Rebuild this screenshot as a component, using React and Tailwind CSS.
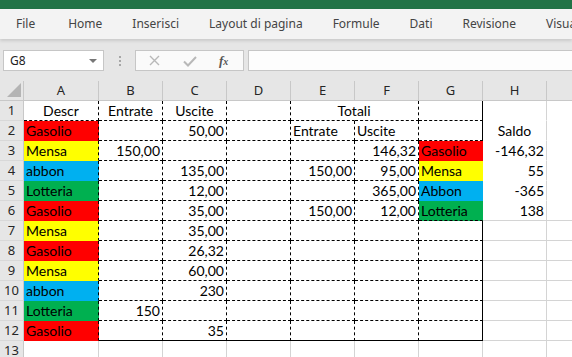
import React from 'react';

const COLS = ['A', 'B', 'C', 'D', 'E', 'F', 'G', 'H', 'I'];

const FILL = {
  red: 'bg-[#ff0000]',
  yel: 'bg-[#ffff00]',
  blu: 'bg-[#00b0f0]',
  grn: 'bg-[#00b050]',
};

const RIGHT = {
  g: 'border-r-[#d4d4d4]',
  d: 'border-r-black [border-right-style:dashed]',
  s: 'border-r-black',
  n: 'border-r-transparent',
  w: 'border-r-white',
};

const BOTTOM = {
  g: 'border-b-[#d4d4d4]',
  d: 'border-b-black [border-bottom-style:dashed]',
  s: 'border-b-black',
  n: 'border-b-transparent',
  w: 'border-b-white',
};

// one entry per cell: [text, align, fill, right, bottom]
const c = (t = '', a = 'l', f = '', r = 'd', b = 'd') => ({ t, a, f, r, b });

const rowA = (t, f, b = 'n') => c(t, 'l', f, 'd', b);
const hCell = (t = '', b = 'w') => c(t, 'r', '', 'g', b);

const rows = [
  [c('Descr', 'c'), c('Entrate', 'c'), c('Uscite', 'c'), c(), c('Totali', 'm', '', 'n'), c(), c('', 'l', '', 's'), hCell('', 'w'), hCell('', 'w')],
  [rowA('Gasolio', 'red'), c(), c('50,00', 'r'), c(), c('Entrate'), c('Uscite'), c('', 'l', '', 's'), c('Saldo', 'c', '', 'g', 'w'), hCell('', 'w')],
  [rowA('Mensa', 'yel'), c('150,00', 'r'), c(), c(), c(), c('146,32', 'r'), c('Gasolio', 'l', 'red', 'n', 'n'), hCell('-146,32', 'w'), hCell('', 'w')],
  [rowA('abbon', 'blu'), c(), c('135,00', 'r'), c(), c('150,00', 'r'), c('95,00', 'r'), c('Mensa', 'l', 'yel', 'n', 'n'), hCell('55', 'w'), hCell('', 'w')],
  [rowA('Lotteria', 'grn'), c(), c('12,00', 'r'), c(), c(), c('365,00', 'r'), c('Abbon', 'l', 'blu', 'n', 'n'), hCell('-365', 'w'), hCell('', 'w')],
  [rowA('Gasolio', 'red'), c(), c('35,00', 'r'), c(), c('150,00', 'r'), c('12,00', 'r'), c('Lotteria', 'l', 'grn', 'n', 'd'), hCell('138', 'g'), hCell('', 'g')],
  [rowA('Mensa', 'yel'), c(), c('35,00', 'r'), c(), c(), c(), c('', 'l', '', 's'), hCell('', 'g'), hCell('', 'g')],
  [rowA('Gasolio', 'red'), c(), c('26,32', 'r'), c(), c(), c(), c('', 'l', '', 's'), hCell('', 'g'), hCell('', 'g')],
  [rowA('Mensa', 'yel'), c(), c('60,00', 'r'), c(), c(), c(), c('', 'l', '', 's'), hCell('', 'g'), hCell('', 'g')],
  [rowA('abbon', 'blu'), c(), c('230', 'r'), c(), c(), c(), c('', 'l', '', 's'), hCell('', 'g'), hCell('', 'g')],
  [rowA('Lotteria', 'grn'), c('150', 'r'), c(), c(), c(), c(), c('', 'l', '', 's'), hCell('', 'g'), hCell('', 'g')],
  [rowA('Gasolio', 'red'), c('', 'l', '', 'd', 's'), c('35', 'r', '', 'd', 's'), c('', 'l', '', 'd', 's'), c('', 'l', '', 'd', 's'), c('', 'l', '', 'd', 's'), c('', 'l', '', 's', 's'), hCell('', 'g'), hCell('', 'g')],
  COLS.map(() => c('', 'l', '', 'g', 'g')),
];

const ALIGN = {
  l: 'justify-start pl-[2px]',
  r: 'justify-end pr-[2px]',
  c: 'justify-center',
  m: 'justify-end',
};

const Cell = ({ cell }) => (
  <div
    className={`relative h-5 border-r border-b flex items-center text-[14px] leading-none text-black whitespace-nowrap ${ALIGN[cell.a]} ${FILL[cell.f] || ''} ${RIGHT[cell.r]} ${BOTTOM[cell.b]}`}
  >
    {cell.a === 'm' ? (
      <span className="absolute left-full -translate-x-1/2 z-10 pt-[1px]">{cell.t}</span>
    ) : (
      <span className="pt-[1px]">{cell.t}</span>
    )}
  </div>
);

const menu = ['File', 'Home', 'Inserisci', 'Layout di pagina', 'Formule', 'Dati', 'Revisione', 'Visualizza'];

export default function App() {
  return (
    <div className="w-[572px] h-[357px] overflow-hidden bg-white font-['Lato',sans-serif]">
      <div className="h-[9px] bg-[#217346]" />

      <div className="h-[30px] bg-[#f3f3f3] flex items-center gap-[30px] pl-4 whitespace-nowrap font-['Noto_Sans',sans-serif] text-[12px] text-[#444] relative z-10 shadow-[0_2px_3px_rgba(0,0,0,0.12)]">
        {menu.map((m, i) => (
          <span key={m} className={i === 1 ? 'ml-[3px]' : ''}>{m}</span>
        ))}
      </div>

      <div className="h-[42px] bg-[#e6e6e6] flex items-start pt-[11px] pl-[3px]">
        <div className="w-[101px] h-[21px] bg-white border border-[#c6c6c6] flex items-center justify-between pl-[6px] pr-[6px] font-['Noto_Sans',sans-serif] text-[12px] text-[#222]">
          <span>G8</span>
          <span className="w-0 h-0 border-l-[4px] border-r-[4px] border-t-[4px] border-l-transparent border-r-transparent border-t-[#777]" />
        </div>
        <div className="w-[31px] h-[21px] flex flex-col items-center justify-center gap-[2px]">
          <span className="w-[2px] h-[2px] bg-[#a6a6a6]" />
          <span className="w-[2px] h-[2px] bg-[#a6a6a6]" />
          <span className="w-[2px] h-[2px] bg-[#a6a6a6]" />
        </div>
        <div className="w-[109px] h-[21px] bg-[#fafafa] border border-[#c6c6c6] flex items-center pl-[12px]">
          <svg width="13" height="13" viewBox="0 0 13 13" className="mr-[22px]">
            <path d="M2 2 L11 11 M11 2 L2 11" stroke="#b8b8b8" strokeWidth="1.4" />
          </svg>
          <svg width="14" height="12" viewBox="0 0 14 12" className="mr-[22px]">
            <path d="M1 6.5 L5 10.5 L13 2" stroke="#b8b8b8" strokeWidth="2" fill="none" />
          </svg>
          <span className="font-['Liberation_Serif',serif] italic text-[13px] text-[#555] font-bold leading-none">
            f<span className="text-[10px]">x</span>
          </span>
        </div>
        <div className="ml-[4px] flex-1 h-[21px] bg-[#fdfdfd] border border-[#c6c6c6] border-r-0" />
      </div>

      <div className="grid grid-cols-[24px_75px_64px_64px_64px_64px_64px_64px_64px_64px_1fr]">
        <div className="relative h-5 bg-[#e6e6e6] border-r border-b border-[#c8c8c8]">
          <svg width="14" height="14" viewBox="0 0 14 14" className="absolute right-[2px] bottom-[3px]">
            <path d="M14 0 L14 14 L0 14 Z" fill="#b4b4b4" />
          </svg>
        </div>
        {COLS.map((l) => (
          <div
            key={l}
            className="h-5 bg-[#e6e6e6] border-r border-b border-[#c8c8c8] flex items-center justify-center font-['Noto_Sans',sans-serif] text-[13px] text-[#262626]"
          >
            {l}
          </div>
        ))}
        <div className="h-5 bg-[#e6e6e6] border-b border-[#c8c8c8]" />

        {rows.map((r, i) => (
          <React.Fragment key={i}>
            <div className="h-5 bg-[#e6e6e6] border-r border-b border-r-[#c8c8c8] border-b-[#d8d8d8] flex items-center justify-center font-['Noto_Sans',sans-serif] text-[13px] text-[#262626]">
              {i + 1}
            </div>
            {r.map((cell, j) => (
              <Cell key={j} cell={cell} />
            ))}
            <div className={`h-5 border-b ${i < 5 ? 'border-b-white' : 'border-b-[#d4d4d4]'}`} />
          </React.Fragment>
        ))}
      </div>
    </div>
  );
}
